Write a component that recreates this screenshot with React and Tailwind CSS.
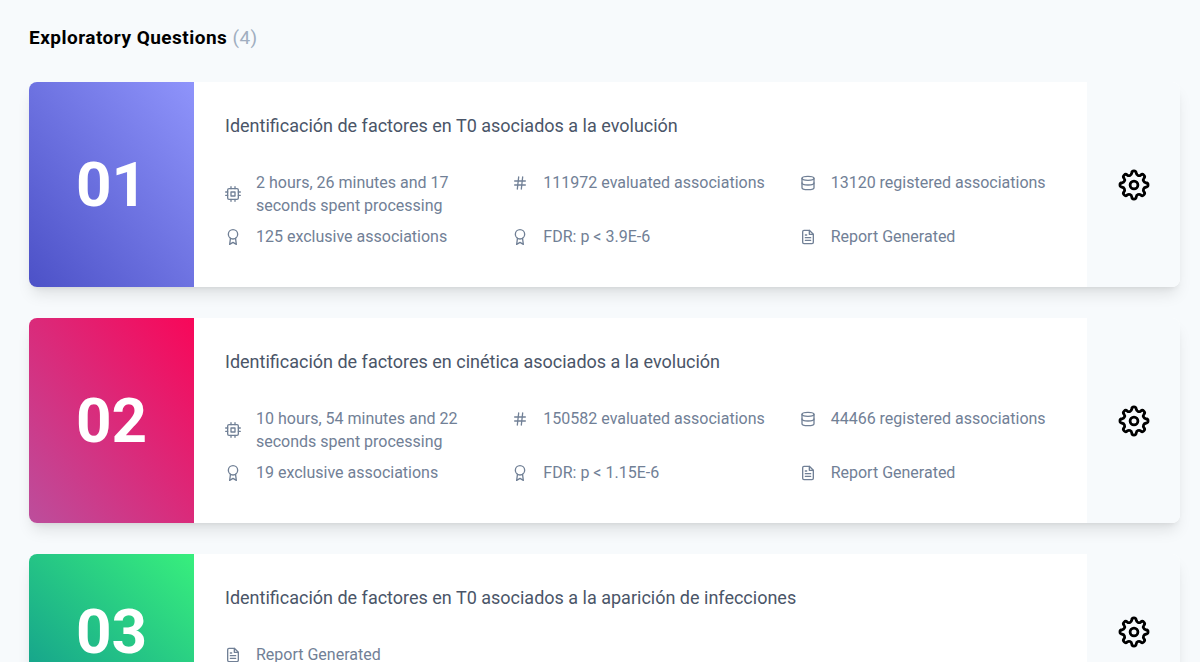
import React from "react";
import { FiCpu, FiHash, FiDatabase, FiAward, FiFileText } from "react-icons/fi";

const questions = [
  {
    title: "Identificación de factores en T0 asociados a la evolución",
    gradient: "bg-linear-to-tr/srgb from-[#4c51c7] to-[#8f94fb]",
    stats: [
      { icon: FiCpu, text: "2 hours, 26 minutes and 17 seconds spent processing" },
      { icon: FiHash, text: "111972 evaluated associations" },
      { icon: FiDatabase, text: "13120 registered associations" },
      { icon: FiAward, text: "125 exclusive associations" },
      { icon: FiAward, text: "FDR: p < 3.9E-6" },
      { icon: FiFileText, text: "Report Generated" },
    ],
  },
  {
    title: "Identificación de factores en cinética asociados a la evolución",
    gradient: "bg-linear-to-tr/srgb from-[#bc4e9c] to-[#f80759]",
    stats: [
      { icon: FiCpu, text: "10 hours, 54 minutes and 22 seconds spent processing" },
      { icon: FiHash, text: "150582 evaluated associations" },
      { icon: FiDatabase, text: "44466 registered associations" },
      { icon: FiAward, text: "19 exclusive associations" },
      { icon: FiAward, text: "FDR: p < 1.15E-6" },
      { icon: FiFileText, text: "Report Generated" },
    ],
  },
  {
    title: "Identificación de factores en T0 asociados a la aparición de infecciones",
    gradient: "bg-linear-to-tr/srgb from-[#11998e] to-[#38ef7d]",
    stats: [{ icon: FiFileText, text: "Report Generated" }],
  },
];

const GearIcon = () => (
  <svg
    className="w-8 h-8"
    viewBox="0 0 32 32"
    fill="none"
    stroke="currentColor"
    strokeWidth="2.8"
    strokeLinecap="round"
    strokeLinejoin="round"
    aria-hidden="true"
  >
    <path d="M13.75 4.2A2.25 2.25 0 0 1 18.25 4.2A2.8 2.8 0 0 0 22.75 6.07A2.25 2.25 0 0 1 25.93 9.25A2.8 2.8 0 0 0 27.8 13.75A2.25 2.25 0 0 1 27.8 18.25A2.8 2.8 0 0 0 25.93 22.75A2.25 2.25 0 0 1 22.75 25.93A2.8 2.8 0 0 0 18.25 27.8A2.25 2.25 0 0 1 13.75 27.8A2.8 2.8 0 0 0 9.25 25.93A2.25 2.25 0 0 1 6.07 22.75A2.8 2.8 0 0 0 4.2 18.25A2.25 2.25 0 0 1 4.2 13.75A2.8 2.8 0 0 0 6.07 9.25A2.25 2.25 0 0 1 9.25 6.07A2.8 2.8 0 0 0 13.75 4.2z" />
    <circle cx="16" cy="16" r="3.9" />
  </svg>
);

const Stat = ({ icon: Icon, text }) => (
  <li className="flex items-center">
    <Icon className="w-4 h-4 shrink-0 mr-[15px]" />
    <span>{text}</span>
  </li>
);

const QuestionCard = ({ number, question }) => (
  <article className="flex rounded-lg overflow-hidden bg-white shadow-lg">
    <div
      className={`w-[165px] py-[31px] shrink-0 flex items-center justify-center text-white text-[62px] leading-[94px] font-bold ${question.gradient}`}
    >
      {number}
    </div>

    <div className="flex-1 px-[31px] pt-[31px] pb-[39px]">
      <h2 className="text-lg leading-[25px] text-[#4a5568]">{question.title}</h2>
      <ul className="grid grid-cols-3 items-start gap-x-[31px] gap-y-2 mt-[33px] text-base leading-[23px] text-[#718096]">
        {question.stats.map((stat, i) => (
          <Stat key={i} icon={stat.icon} text={stat.text} />
        ))}
      </ul>
    </div>

    <button
      type="button"
      aria-label="Settings"
      className="w-[93px] shrink-0 flex items-center justify-center bg-[#f7fafc] text-black"
    >
      <GearIcon />
    </button>
  </article>
);

const App = () => {
  return (
    <main className="min-h-screen bg-[#f7fafc] font-[Roboto,sans-serif] pl-[29px] pr-5 py-6">
      <h1 className="text-[19px] leading-[27px] font-bold tracking-wide text-black">
        Exploratory Questions <span className="font-normal text-[#a0aec0]">(4)</span>
      </h1>

      <div className="flex flex-col gap-[31px] mt-[31px]">
        {questions.map((question, i) => (
          <QuestionCard key={i} number={`0${i + 1}`} question={question} />
        ))}
      </div>
    </main>
  );
};

export default App;
